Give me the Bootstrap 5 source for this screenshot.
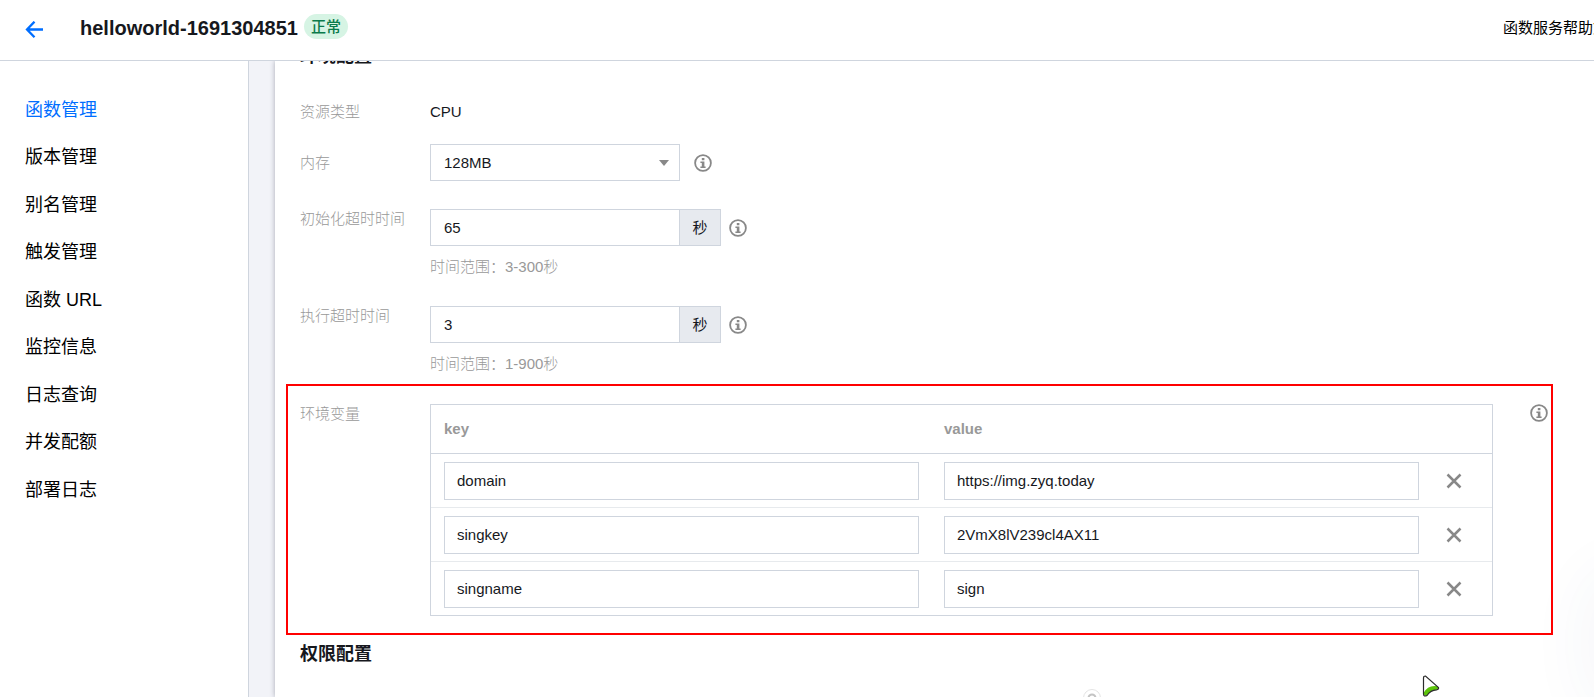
<!DOCTYPE html>
<html lang="zh-CN">
<head>
<meta charset="utf-8">
<meta name="viewport" content="width=device-width, initial-scale=1">
<title>helloworld-1691304851</title>
<link href="https://cdn.jsdelivr.net/npm/bootstrap@5.3.0/dist/css/bootstrap.min.css" rel="stylesheet">
<script src="https://cdn.jsdelivr.net/npm/bootstrap@5.3.0/dist/js/bootstrap.bundle.min.js" defer></script>
<style>
  :root { --line: #cfd5de; --muted: #999; --ink: #16181d; --brand: #006eff; }
  body { font-family: "Liberation Sans", "Noto Sans CJK SC", sans-serif; font-size: 15px; line-height: 20px; color: var(--ink); font-weight: 300; background: #fff; }
  .topbar { min-height: 61px; padding-left: 25px; border-bottom: 1px solid var(--line); background: #fff; z-index: 2; }
  .back-link { margin-right: 36px; color: var(--brand); }
  .fn-title { font-size: 20px; line-height: 24px; font-weight: 700; }
  .state-pill { margin-left: 6px; padding: 3px 7px 2px; border-radius: 20px; background: #d6f4e4; color: #0a7a4b; font-size: 15px; line-height: 20px; font-weight: 500; }
  .help-link { color: #000; margin-right: -29px; font-weight: 400; }
  .side { width: 249px; padding: 25px 0; border-right: 1px solid var(--line); }
  .side .nav-link { padding: 12px 25px; font-size: 18px; line-height: 24px; color: #000; font-weight: 400; }
  .side li:nth-child(odd) { margin-bottom: -1px; }
  .side .nav-link.active { color: var(--brand); }
  .gutter { background: #f2f3f8; padding-left: 26px; }
  .panel { background: #fff; box-shadow: 0 0 5px rgba(54,58,80,.4); padding-right: 41px; }
  .indent { padding-left: 25px; }
  .sec-title { font-size: 18px; line-height: 24px; font-weight: 700; margin: 0; }
  .sec-hidden { margin-top: -17px; margin-bottom: 34px; }
  .lbl { width: 130px; color: var(--muted); flex: none; }
  .form-control, .form-select, .input-group-text { border-radius: 0; border-color: var(--line); font-size: 15px; line-height: 21px; padding: 7px 13px; color: var(--ink); height: 37px; font-weight: 400; }
  .form-select { width: 250px; background-image: url("data:image/svg+xml,%3Csvg xmlns='http://www.w3.org/2000/svg' viewBox='0 0 10 6'%3E%3Cpath d='M0 0h10L5 6z' fill='%23888'/%3E%3C/svg%3E"); background-size: 10px 6px; background-position: right 10px center; }
  .timeout { width: 291px; }
  .timeout .input-group-text { background: #e7eaef; width: 42px; justify-content: center; padding: 7px 0; }
  .field-gap { margin-top: 28px; }
  .hint { color: var(--muted); margin: 11px 0 1px; }
  .info-btn { width: 18px; height: 18px; color: #888; }
  .info-gap { margin-left: 14px; }
  .mem-row { margin-top: 22px; }
  .marked { margin: 9px 0 7px 11px; border: 2px solid red; padding: 18px 3px 17px 12px; }
  .env { border: 1px solid var(--line); margin: 0; table-layout: fixed; --bs-table-bg: transparent; border-collapse: separate; border-spacing: 0; }
  .env th { height: 49px; padding: 0 13px; color: var(--muted); vertical-align: middle; border-bottom: 1px solid var(--line); }
  .env td { padding: 8px 12px 7px 13px; border-bottom: 1px solid #e7eaed; vertical-align: middle; }
  .env tr:last-child td { border-bottom: 0; }
  .env td:last-child { padding: 2px 0 0 11px; }
  .env .form-control { height: 38px; padding: 6px 12px 8px; }
  .del-col { width: 61px; }
  .table-end { width: 37px; flex: none; }
  .glow { right: -60px; bottom: 0; width: 50px; height: 110px; border-radius: 30px; box-shadow: 0 0 60px 24px rgba(54,70,120,.04); }
  .pointer { left: 89.2%; bottom: 0; pointer-events: none; }
  .bubble { left: 808px; bottom: -10px; }
</style>
</head>
<body class="vh-100 d-flex flex-column overflow-hidden position-relative">
<svg class="d-none">
  <symbol id="i-info" viewBox="0 0 18 18"><circle cx="9" cy="9" r="7.900" fill="none" stroke="currentColor" stroke-width="1.800"/><path d="M7.800 4h2.600v2.200H7.800zM6.400 7.500h4v5h1.200v1.400H6.400v-1.400h1.400V9H6.400z" fill="currentColor"/></symbol>
  <symbol id="i-x" viewBox="0 0 16 16"><path d="M1.500 1.500l13 13M14.500 1.500l-13 13" fill="none" stroke="currentColor" stroke-width="2.500"/></symbol>
</svg>

<header class="topbar d-flex align-items-center overflow-hidden position-relative flex-shrink-0">
  <a class="back-link d-flex" href="#" aria-label="返回"><svg width="19" height="18" viewBox="0 0 19 18"><path d="M9.500 .7L2 8.500l7.500 7.800M2 8.500h16" fill="none" stroke="currentColor" stroke-width="2.300"/></svg></a>
  <h1 class="fn-title mb-1">helloworld-1691304851</h1>
  <span class="state-pill mb-2">正常</span>
  <a class="help-link ms-auto mb-1 text-nowrap text-decoration-none" href="#">函数服务帮助文档</a>
</header>

<div class="d-flex flex-grow-1 overflow-hidden">
  <nav class="side flex-shrink-0">
    <ul class="nav flex-column">
      <li><a class="nav-link active" href="#">函数管理</a></li>
      <li><a class="nav-link" href="#">版本管理</a></li>
      <li><a class="nav-link" href="#">别名管理</a></li>
      <li><a class="nav-link" href="#">触发管理</a></li>
      <li><a class="nav-link" href="#">函数 URL</a></li>
      <li><a class="nav-link" href="#">监控信息</a></li>
      <li><a class="nav-link" href="#">日志查询</a></li>
      <li><a class="nav-link" href="#">并发配额</a></li>
      <li><a class="nav-link" href="#">部署日志</a></li>
    </ul>
  </nav>
  <div class="gutter d-flex flex-grow-1 overflow-hidden">
    <main class="panel flex-grow-1 position-relative">
      <div class="indent">
        <h2 class="sec-title sec-hidden">环境配置</h2>
        <div class="d-flex">
          <div class="lbl">资源类型</div><div>CPU</div>
        </div>
        <div class="mem-row d-flex align-items-center">
          <label class="lbl" for="mem">内存</label>
          <select id="mem" class="form-select"><option>128MB</option></select>
          <button class="info-btn info-gap btn p-0 border-0 d-flex" type="button" aria-label="说明"><svg width="18" height="18"><use href="#i-info"/></svg></button>
        </div>
        <div class="field-gap d-flex">
          <label class="lbl" for="init">初始化超时时间</label>
          <div>
            <div class="d-flex align-items-center">
              <div class="input-group timeout"><input id="init" class="form-control" value="65"><span class="input-group-text">秒</span></div>
              <button class="info-btn btn p-0 border-0 d-flex ms-2" type="button" aria-label="说明"><svg width="18" height="18"><use href="#i-info"/></svg></button>
            </div>
            <div class="hint">时间范围：3-300秒</div>
          </div>
        </div>
        <div class="field-gap d-flex">
          <label class="lbl" for="exec">执行超时时间</label>
          <div>
            <div class="d-flex align-items-center">
              <div class="input-group timeout"><input id="exec" class="form-control" value="3"><span class="input-group-text">秒</span></div>
              <button class="info-btn btn p-0 border-0 d-flex ms-2" type="button" aria-label="说明"><svg width="18" height="18"><use href="#i-info"/></svg></button>
            </div>
            <div class="hint">时间范围：1-900秒</div>
          </div>
        </div>
      </div>

      <section class="marked d-flex">
        <div class="lbl">环境变量</div>
        <table class="table env">
          <colgroup><col><col><col class="del-col"></colgroup>
          <thead><tr><th scope="col">key</th><th scope="col">value</th><th></th></tr></thead>
          <tbody>
            <tr>
              <td><input class="form-control" aria-label="key" value="domain"></td>
              <td><input class="form-control" aria-label="value" value="https://img.zyq.today"></td>
              <td><button class="info-btn btn p-0 border-0 d-flex ms-1" type="button" aria-label="删除"><svg width="16" height="16"><use href="#i-x"/></svg></button></td>
            </tr>
            <tr>
              <td><input class="form-control" aria-label="key" value="singkey"></td>
              <td><input class="form-control" aria-label="value" value="2VmX8lV239cl4AX11"></td>
              <td><button class="info-btn btn p-0 border-0 d-flex ms-1" type="button" aria-label="删除"><svg width="16" height="16"><use href="#i-x"/></svg></button></td>
            </tr>
            <tr>
              <td><input class="form-control" aria-label="key" value="singname"></td>
              <td><input class="form-control" aria-label="value" value="sign"></td>
              <td><button class="info-btn btn p-0 border-0 d-flex ms-1" type="button" aria-label="删除"><svg width="16" height="16"><use href="#i-x"/></svg></button></td>
            </tr>
          </tbody>
        </table>
        <div class="table-end"></div>
        <button class="info-btn btn p-0 border-0 d-flex flex-shrink-0" type="button" aria-label="说明"><svg width="18" height="18"><use href="#i-info"/></svg></button>
      </section>

      <div class="indent"><h2 class="sec-title">权限配置</h2></div>

      <div class="glow position-absolute"></div>
      <svg class="bubble position-absolute" width="18" height="18" viewBox="0 0 18 18"><circle cx="9" cy="9" r="8.500" fill="#fff" stroke="#e4e4e4"/><circle cx="9" cy="9" r="3.500" fill="none" stroke="#c4c4c4" stroke-width="2"/></svg>
    </main>
  </div>
</div>
<svg class="pointer position-absolute z-3" width="18" height="22" viewBox="0 0 18 22" aria-hidden="true"><path d="M1.500 3Q1.500 1 3.500 1L16.500 12.500Q17 14.500 14.500 14.800Q8.500 15 5 20.500Q1.500 22 1.500 19z" fill="#fff"/><path d="M1.500 18Q6 9.500 15.500 11.200L16.500 12.500Q17 14.500 14.500 14.800Q8.500 15 5 20.500Q2 21.500 1.500 18z" fill="#5cc40a"/><path d="M1.500 3Q1.500 1 3.500 1L16.500 12.500Q17 14.500 14.500 14.800Q8.500 15 5 20.500Q1.500 22 1.500 19z" fill="none" stroke="#2b2b2b" stroke-width="1.200"/></svg>
</body>
</html>
